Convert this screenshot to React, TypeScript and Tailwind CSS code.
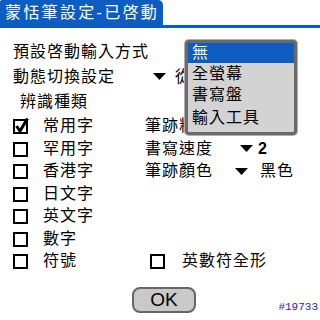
import React from 'react';

const font = { fontFamily: '"Liberation Sans", "Noto Sans CJK TC", sans-serif' };

const Arrow: React.FC = () => (
  <svg width="13" height="7" viewBox="0 0 13 7" className="shrink-0">
    <polygon points="0,0 13,0 6.5,7" fill="#000" />
  </svg>
);

const Box: React.FC<{ checked?: boolean }> = ({ checked }) => (
  <svg width="16" height="16" viewBox="0 0 16 16" className="shrink-0">
    <rect x="1" y="2" width="13" height="13" fill="none" stroke="#000" strokeWidth="2" />
    {checked && <path d="M3.5 8 L7 13 L14.5 0.5" fill="none" stroke="#000" strokeWidth="3" />}
  </svg>
);

const kinds = [
  { label: '常用字', checked: true },
  { label: '罕用字' },
  { label: '香港字' },
  { label: '日文字' },
  { label: '英文字' },
  { label: '數字' },
  { label: '符號' },
];

const Right: React.FC<{ index: number }> = ({ index }) => {
  // first row is partly hidden under the open popup
  if (index === 0)
    return <span className="w-[40px] overflow-hidden whitespace-nowrap">筆跡粗細</span>;
  if (index === 1)
    return (
      <div className="flex items-center">
        <span className="w-[95px]">書寫速度</span>
        <Arrow />
        <span className="ml-[5px] font-bold">2</span>
      </div>
    );
  if (index === 2)
    return (
      <div className="flex items-center">
        <span className="w-[90px]">筆跡顏色</span>
        <Arrow />
        <span className="ml-[12px]">黑色</span>
      </div>
    );
  if (index === 6)
    return (
      <div className="flex items-center gap-[16px] pl-[5px]">
        <Box />
        <span>英數符全形</span>
      </div>
    );
  return null;
};

const App: React.FC = () => {
  return (
    <div className="relative w-[320px] h-[320px] bg-white text-black overflow-hidden text-[16px] tracking-[1px]" style={font}>
      <div className="flex flex-col">
        <div className="h-[25px] w-[163px] bg-[#0c5cc2] rounded-tr-[5px] rounded-tl-[2px] text-white text-[16px] tracking-[2.3px] pl-[5px] flex items-center">
          蒙恬筆設定-已啓動
        </div>
        <div className="h-[3px] bg-[#0c5cc2]" />
      </div>

      <div className="flex flex-col pl-[13px] pt-[11px]">
        <div className="h-[25px] flex items-center">預設啓動輸入方式</div>
        <div className="h-[25px] flex items-center">
          <span className="w-[140px]">動態切換設定</span>
          <Arrow />
          <span className="ml-[9px] w-[10px] overflow-hidden whitespace-nowrap">從不</span>
        </div>
        <div className="h-[26px] flex items-center pl-[7px]">辨識種類</div>
        {kinds.map((k, i) => (
          <div key={k.label} className="h-[22.5px] flex items-center">
            <div className="w-[132px] flex items-center gap-[14px]">
              <Box checked={k.checked} />
              <span>{k.label}</span>
            </div>
            <Right index={i} />
          </div>
        ))}
      </div>

      <div className="grid grid-cols-[132px_64px_1fr] mt-[14px]">
        <div />
        <button className="h-[26px] rounded-[8px] border-2 border-[#666] bg-[#c9c9c9] text-[19px] tracking-normal leading-none flex items-center justify-center">
          OK
        </button>
        <div className="self-end text-right pr-[2px] text-[11px] tracking-normal text-[#1f1f9e] font-['Liberation_Mono',monospace] leading-none">
          #19733
        </div>
      </div>

      <div className="absolute left-[185px] top-[40px] w-[112px] h-[95px] rounded-[4px] border-[3px] border-[#6a6a6a] bg-[#d3d3d3] ring-1 ring-[#b0b0b0] flex flex-col">
        <div className="h-[20px] shrink-0 bg-[#0c5cc2] text-white pl-[4px] flex items-center">無</div>
        <div className="h-[21px] shrink-0 pl-[4px] flex items-center">全螢幕</div>
        <div className="h-[22px] shrink-0 pl-[4px] flex items-center">書寫盤</div>
        <div className="h-[24px] shrink-0 pl-[4px] flex items-center">輸入工具</div>
      </div>
    </div>
  );
};

export default App;
